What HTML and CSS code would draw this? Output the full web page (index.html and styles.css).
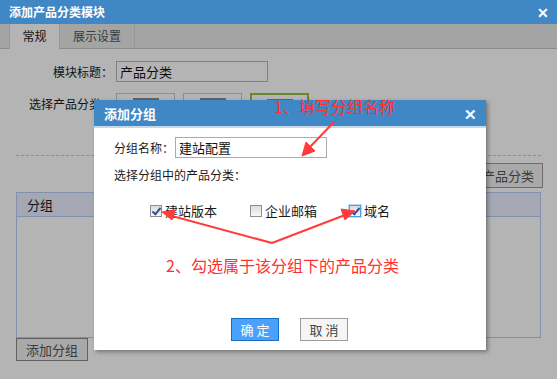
FILE: index.html
```html
<!DOCTYPE html>
<html lang="zh-CN">
<head>
<meta charset="UTF-8" />
<title>添加产品分类模块</title>
<link rel="stylesheet" href="styles.css">
</head>
<body>
<div class="win">
  <div class="win-title">添加产品分类模块<span class="x">&#x2715;</span></div>
  <div class="win-body">
    <div class="tabs">
      <span class="tab active">常规</span>
      <span class="tab">展示设置</span>
    </div>
    <div class="form">
      <div class="row">
        <label class="lbl">模块标题：</label>
        <input class="txt" type="text" value="产品分类" />
      </div>
      <div class="row row-cats">
        <label class="lbl">选择产品分类：</label>
        <span class="cat"><i></i></span>
        <span class="cat"><i></i></span>
        <span class="cat sel"><i></i></span>
      </div>
      <div class="dash"></div>
      <div class="tools"><button class="btn">添加产品分类</button></div>
      <div class="grid">
        <div class="grid-head">分组</div>
      </div>
      <button class="btn">添加分组</button>
    </div>
    <div class="mask"></div>
  </div>
</div>

<!-- dialog -->
<div class="dlg">
  <div class="dlg-title">添加分组<span class="x">&#x2715;</span></div>
  <div class="dlg-body">
    <div class="drow">
      <label>分组名称：</label>
      <input class="dtxt" type="text" value="建站配置" />
    </div>
    <div class="drow">选择分组中的产品分类：</div>
    <div class="checks">
      <label class="ck"><span class="box on"></span>建站版本</label>
      <label class="ck"><span class="box"></span>企业邮箱</label>
      <label class="ck"><span class="box on focus"></span>域名</label>
    </div>
    <div class="dlg-foot">
      <button class="ok">确 定</button>
      <button class="cancel">取 消</button>
    </div>
  </div>
</div>

<!-- annotations -->
<span class="note note1">1、填写分组名称</span>
<span class="note note2">2、勾选属于该分组下的产品分类</span>
<svg class="arrows" width="557" height="379" viewBox="0 0 557 379">
  <g fill="#ff3b3b" stroke="#ff3b3b" stroke-width="2">
    <line x1="334" y1="122" x2="309" y2="148" />
    <polygon points="302,156 306,142 315,151" stroke-width="1" />
    <line x1="272" y1="243" x2="172" y2="216" />
    <polygon points="162,212 175,210 172,220" stroke-width="1" />
    <line x1="272" y1="243" x2="345" y2="215" />
    <polygon points="355,211 341,209 345,220" stroke-width="1" />
  </g>
</svg>
</body>
</html>
```
FILE: styles.css
```css
*{box-sizing:border-box;}
body{margin:0;width:557px;height:379px;overflow:hidden;position:relative;
  font-family:"Noto Sans CJK SC","Liberation Sans",sans-serif;font-size:12px;color:#1a1a1a;background:#fff;}

/* outer window --------------------------------------- */
.win-title{height:24px;background:#3f88c5;color:#fff;font-weight:bold;font-size:12px;
  line-height:24px;padding-left:9px;display:flex;justify-content:space-between;}
.x{font-weight:bold;font-size:14px;padding-right:8px;}
.win-body{position:relative;height:355px;}
.tabs{height:25px;background:#e9e9e9;border-bottom:1px solid #c5c5c5;padding-left:9px;display:flex;}
.tab{width:75px;height:24px;line-height:24px;text-align:center;color:#555;border-right:1px solid #d8d8d8;}
.tab.active{width:51px;background:#fff;color:#222;border-left:1px solid #d8d8d8;height:25px;}
.form{padding:12px 0 0 16px;}
.row{display:flex;align-items:center;height:21px;margin-bottom:11px;}
.lbl{width:97px;text-align:right;}
.txt{width:152px;height:21px;border:1px solid #b6b6b6;margin-left:3px;padding:0 3px;
  font:inherit;font-size:13px;color:#111;}
.row-cats{height:32px;align-items:flex-start;}
.row-cats .lbl{margin-top:2px;}
.cat{width:59px;height:32px;border:1px solid #c8c8c8;margin-left:4px;margin-right:4px;padding-top:4px;display:flex;justify-content:center;}
.cat:first-of-type{margin-left:3px;}
.cat i{display:block;width:26px;height:3px;background:#8d8d8d;}
.cat.sel{border:2px solid #8fc23a;}
.dash{border-top:1px dashed #a8cff8;margin:30px 16px 0 0;}
.tools{display:flex;justify-content:flex-end;padding:7px 14px 4px 0;}
.btn{height:25px;padding:0 8px;background:#f0f0f0;border:1px solid #9a9a9a;font:inherit;font-size:13px;color:#555;}
.grid{width:525px;height:146px;border:1px solid #b8ccf6;}
.grid-head{height:24px;line-height:24px;padding-left:10px;background:#eaeefc;border-bottom:1px solid #b8ccf6;font-size:13px;}
.grid + .btn{height:23px;padding:0 9px;border-color:#8a8a8a;}
.mask{position:absolute;inset:0;background:rgba(0,0,0,.295);}

/* dialog --------------------------------------------- */
.dlg{position:absolute;left:94px;top:100px;width:392px;height:250px;background:#fff;
  box-shadow:2px 2px 4px rgba(0,0,0,.35);}
.dlg-title{height:28px;line-height:28px;background:#3f88c5;color:#fff;font-weight:bold;font-size:13px;
  padding-left:10px;display:flex;justify-content:space-between;border-bottom:2px solid #c6d9ea;}
.dlg-title .x{padding-right:9px;font-size:15px;}
.dlg-body{padding:9px 0 0 20px;}
.drow{display:flex;align-items:center;height:21px;margin-bottom:6px;}
.dtxt{width:152px;height:21px;border:1px solid #ababab;margin-left:1px;padding:0 3px;font:inherit;font-size:13px;color:#111;}
.checks{display:flex;padding:10px 0 0 36px;}
.ck{display:flex;align-items:center;font-size:13px;}
.ck:nth-child(1){width:100px;}
.ck:nth-child(2){width:99px;}
.box{width:12px;height:12px;border:1px solid #8f8f8f;margin-right:3px;position:relative;
  background:linear-gradient(#dcdcdc,#f8f8f8);}
.box.on::after{content:"";position:absolute;left:3px;top:0px;width:3px;height:7px;
  border:solid #3a4f9a;border-width:0 2px 2px 0;transform:rotate(40deg);}
.box.focus{border-color:#4a9de6;box-shadow:0 0 0 1px #bcdcf8;}
.dlg-foot{display:flex;gap:21px;padding:98px 0 0 117px;}
.ok,.cancel{width:48px;height:23px;font:inherit;font-size:13px;padding:0;}
.ok{background:#49a1fb;border:1px solid #1a6ec8;color:#fff;}
.cancel{background:#f5f5f5;border:1px solid #9c9c9c;color:#444;}

/* annotations ---------------------------------------- */
.note{position:absolute;color:#ff3030;font-size:16px;line-height:20px;white-space:nowrap;}
.note1{left:274px;top:96px;}
.note2{left:166px;top:255px;}
.arrows{position:absolute;left:0;top:0;pointer-events:none;}
```
